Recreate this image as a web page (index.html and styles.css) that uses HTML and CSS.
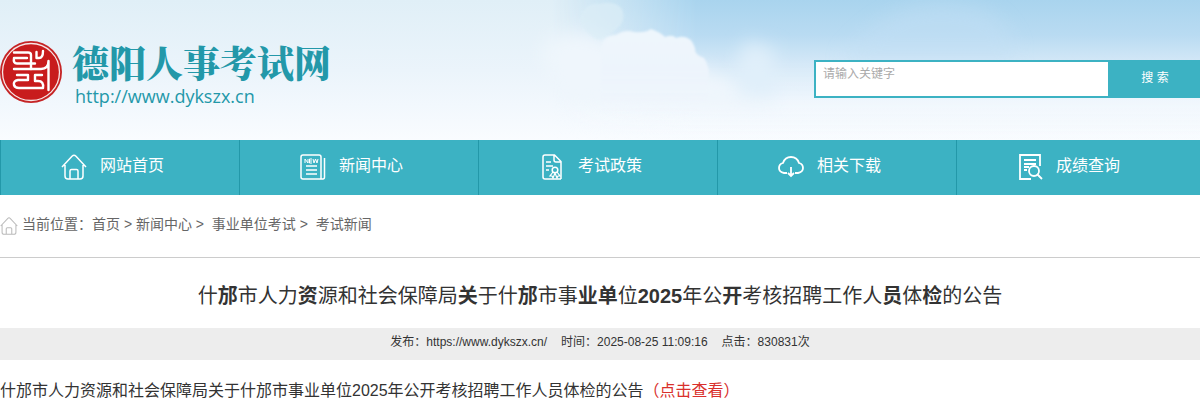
FILE: index.html
```
<!DOCTYPE html>
<html lang="zh-CN">
<head>
    <meta charset="UTF-8">
    <meta name="viewport" content="width=device-width, initial-scale=1.0">
    <title>德阳人事考试网</title>
    <link rel="stylesheet" href="styles.css">
</head>
<body>
    <header class="header">
        <svg class="sky" viewBox="0 0 1200 140" preserveAspectRatio="none" aria-hidden="true">
            <defs>
                <linearGradient id="blue" x1="0" y1="0" x2="0" y2="1">
                    <stop offset="0" stop-color="#a9d4ee"/>
                    <stop offset="0.25" stop-color="#b9dbf2"/>
                    <stop offset="0.45" stop-color="#d4e8f7"/>
                    <stop offset="0.75" stop-color="#f1f7fd" stop-opacity="0.8"/>
                    <stop offset="1" stop-color="#f8fbff" stop-opacity="0"/>
                </linearGradient>
                <linearGradient id="side" x1="0" y1="0" x2="1" y2="0">
                    <stop offset="0.46" stop-color="#fff" stop-opacity="0"/>
                    <stop offset="0.58" stop-color="#fff"/>
                </linearGradient>
                <mask id="fade"><rect width="1200" height="140" fill="url(#side)"/></mask>
                <filter id="soft" x="-30%" y="-30%" width="160%" height="160%"><feGaussianBlur stdDeviation="9"/></filter>
                <filter id="edge"><feGaussianBlur stdDeviation="1.2"/></filter>
                <linearGradient id="puff" x1="0" y1="0" x2="0" y2="1">
                    <stop offset="0" stop-color="#eef6fc"/>
                    <stop offset="0.5" stop-color="#edf4fc"/>
                    <stop offset="1" stop-color="#f0f6fd" stop-opacity="0"/>
                </linearGradient>
            </defs>
            <rect width="1200" height="140" fill="url(#blue)" mask="url(#fade)"/>
            <path d="M540 50 Q570 20 610 42 L700 70 Q760 95 790 110 L560 100Z" fill="#eff6fc" filter="url(#soft)"/>
            <path d="M580 20 Q584 2 600 4 Q614 0 622 9 Q627 22 615 30 L600 40 Q588 38 580 20Z" fill="#dceef7" opacity="0.7" filter="url(#edge)"/>
            <path d="M601 50 Q601 36 616 35 Q625 29 634 32 Q645 33 651 29 Q660 32 665 37 Q673 34 676 38 Q690 33 695 48 Q694 55 704 58 Q711 68 708 84 Q714 110 690 115 L600 115Z" fill="url(#puff)" filter="url(#edge)"/>
            <path d="M741 53 Q748 38 756 43 Q765 53 775 46 Q770 68 778 96 L740 96 Q734 75 741 53Z" fill="#e0effa" filter="url(#soft)"/>
            <path d="M840 60 Q900 -20 990 12 Q1020 35 1015 60Z" fill="#c2dff4" opacity="0.5" filter="url(#soft)"/>
        </svg>
        <a class="logo" href="#">
            <svg class="seal" viewBox="0 0 64 64" aria-hidden="true">
                <circle cx="31" cy="32" r="31" fill="#c52425"/>
                <circle cx="31" cy="32" r="28.5" fill="#c81c1d" stroke="#f7e6e6" stroke-width="1.3"/>
                <g fill="none" stroke="#fff" stroke-width="2.4" stroke-linecap="round" stroke-linejoin="round">
                    <path d="M14 12.500H28Q31 12.500 31 15V29M14 18H27M14 18Q13 23.500 17 23.500H35"/>
                    <path d="M36.500 12V18H39Q43 18 43 11"/>
                    <path d="M14 29H41Q48.500 29 48.500 21V50"/>
                    <path d="M17 35H28V40H18Q13 41 14 45Q15 48 19 48H43Q44 41 38 41H35V35H42"/>
                </g>
            </svg>
            <span class="logo-text">
                <strong class="logo-name">德阳人事考试网</strong>
                <span class="logo-url">http://www.dykszx.cn</span>
            </span>
        </a>
        <form class="search">
            <input type="text" class="search-input" aria-label="请输入关键字" placeholder="请输入关键字">
            <button type="button" class="search-btn">搜 索</button>
        </form>
    </header>

    <nav class="nav">
        <a href="#">
            <svg viewBox="0 0 26 26"><path d="M1 13L11 2.2Q13 .2 15 2.2L25 13M4 11V22Q4 25 7 25H19Q22 25 22 22V11M9 25V17Q9 15.5 10.500 15.500H15.500Q17 15.500 17 17V25"/></svg>
            <span>网站首页</span>
        </a>
        <a href="#">
            <svg viewBox="0 0 26 26"><path d="M3 1H19Q21 1 21 3V25H3Q1 25 1 23V3Q1 1 3 1ZM21 25H23Q24.500 25 24.500 23V4M6 12H17M6 16H17M6 20H17"/><path stroke-width="1" d="M5 9V5L8 9V5M12 5H9.500V9H12M9.500 7H12M13 5L14 9L15.500 5L17 9L18 5"/></svg>
            <span>新闻中心</span>
        </a>
        <a href="#">
            <svg viewBox="0 0 26 26"><path d="M22 25H6Q4 25 4 23V3Q4 1 6 1H15.500L22 7.500V25M15 1V6Q15 8 17 8H22M7 8H12M7 12H14M7 16H10"/><circle cx="16" cy="16" r="2.800"/><path stroke-width="1.200" d="M14 18L11 22H13L14 24L16 19L18 24L19 22H21L18 18"/></svg>
            <span>考试政策</span>
        </a>
        <a href="#">
            <svg viewBox="0 0 26 26"><path stroke-width="1.800" d="M9 19H6Q1 18 1 14Q1 10 5 9Q7 3 13 3Q19 3 21 9Q25 10 25 14Q25 18 20 19H17M13 13V22M10 19L13 22L16 19"/></svg>
            <span>相关下载</span>
        </a>
        <a href="#">
            <svg viewBox="0 0 26 26"><path stroke-width="1.800" d="M14 25H3V1H23V12M7 6H19M7 10H19M7 13H12M7 16H10M20 20L25 25"/><circle cx="17" cy="17" r="5" stroke-width="1.800"/></svg>
            <span>成绩查询</span>
        </a>
    </nav>

    <div class="crumbs">
        <svg viewBox="0 0 26 26"><path d="M1 13L11 2.200Q13 .2 15 2.200L25 13M3 11V22Q3 25 6 25H20Q23 25 23 22V11M9 25V17Q9 15.500 10.500 15.500H15.500Q17 15.500 17 17V25"/></svg>
        <span>当前位置：<a href="#">首页</a> &gt; <a href="#">新闻中心</a> &gt;&nbsp; <a href="#">事业单位考试</a> &gt;&nbsp; <a href="#">考试新闻</a></span>
    </div>

    <main class="article">
        <h1>什<b>邡</b>市人力<b>资</b>源和社会保障局<b>关</b>于什<b>邡</b>市事<b>业单</b>位<b>2025</b>年公<b>开</b>考核招聘工作人<b>员</b>体<b>检</b>的公告</h1>
        <div class="info">
            <span>发布：https://www.dykszx.cn/</span>
            <span>时间：2025-08-25 11:09:16</span>
            <span>点击：830831次</span>
        </div>
        <p class="content">什邡市人力资源和社会保障局关于什邡市事业单位2025年公开考核招聘工作人员体检的公告<a href="#">（点击查看）</a></p>
    </main>
</body>
</html>
```
FILE: styles.css
```
* {
    box-sizing: border-box;
}
body {
    margin: 0;
    font-family: "Liberation Sans", "Noto Sans CJK SC", sans-serif;
    font-size: 14px;
    color: #333;
    background-color: #fff;
}
a {
    color: inherit;
    text-decoration: none;
}
svg {
    flex: none;
    fill: none;
}

/* header */
.header {
    position: relative;
    display: flex;
    justify-content: space-between;
    align-items: flex-start;
    height: 140px;
    background: linear-gradient(#e0eff7, #ebf4fb 50%, #f9fcff);
}
.sky {
    position: absolute;
    top: 0;
    left: 0;
    width: 100%;
    height: 100%;
}
.logo {
    position: relative;
    display: flex;
    gap: 8px;
    padding-top: 40px;
    color: #2398a9;
}
.seal {
    width: 64px;
    height: 64px;
}
.logo-text {
    display: flex;
    flex-direction: column;
}
.logo-name {
    font-family: "Noto Serif CJK SC", "Noto Sans CJK SC", serif;
    font-size: 37px;
    font-weight: 900;
    line-height: 44px;
}
.logo-url {
    padding-left: 3px;
    font-family: "Open Sans", sans-serif;
    font-size: 18px;
    line-height: 24px;
}
.search {
    position: relative;
    display: flex;
    width: 386px;
    height: 38px;
    margin-top: 60px;
}
.search-input {
    flex: 1;
    min-width: 0;
    padding: 0 7px 11px;
    border: 2px solid #3cb2c3;
    border-right: 0;
    font: 12px "Liberation Sans", "Noto Sans CJK SC", sans-serif;
    background-color: #fff;
}
.search-input::placeholder {
    color: #aaa;
}
.search-btn {
    width: 92px;
    padding: 0 0 6px 2px;
    border: 0;
    font: 12px "Liberation Sans", "Noto Sans CJK SC", sans-serif;
    color: #fff;
    background-color: #3cb2c3;
}

/* nav */
.nav {
    display: flex;
    height: 55px;
    padding-right: 5px;
    background-color: #3cb2c3;
}
.nav a {
    flex: 1;
    display: flex;
    gap: 13px;
    padding-left: 60px;
    border-left: 1px solid #2398a9;
    font-size: 16px;
    line-height: 52px;
    color: #fff;
}
.nav svg {
    width: 26px;
    height: 26px;
    margin-top: 14px;
    stroke: #fff;
    stroke-width: 1.5;
}

/* breadcrumb */
.crumbs {
    display: flex;
    gap: 4px;
    height: 63px;
    border-bottom: 1px solid #ccc;
    line-height: 58px;
    color: #666;
}
.crumbs svg {
    width: 18px;
    height: 18px;
    margin-top: 22px;
    stroke: #bbb;
    stroke-width: 1.5;
}

/* article */
.article h1 {
    margin: 0;
    font-size: 20px;
    font-weight: 400;
    line-height: 30px;
    padding: 23px 0 17px;
    text-align: center;
}
.info {
    display: flex;
    justify-content: center;
    gap: 14px;
    height: 32px;
    font-size: 12px;
    line-height: 28px;
    background-color: #ededed;
}
.content {
    margin: 0;
    padding-top: 19px;
    font-size: 16px;
    line-height: 24px;
}
.content a {
    color: #d9302c;
}
```
